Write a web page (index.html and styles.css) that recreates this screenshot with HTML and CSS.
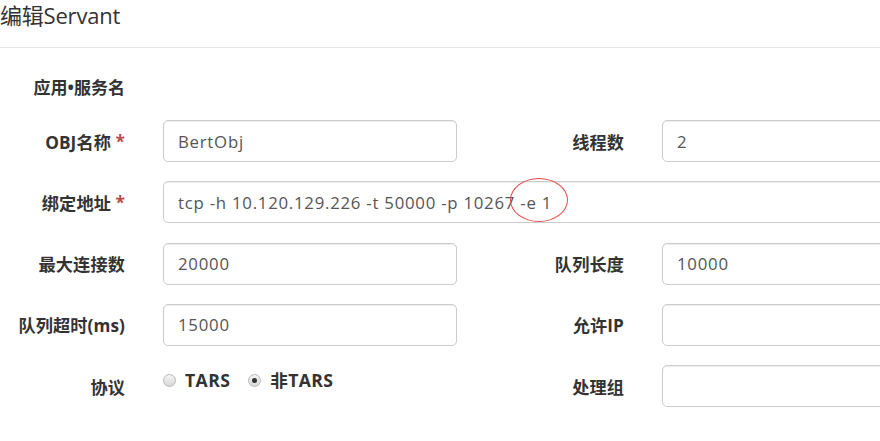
FILE: index.html
```html
<!DOCTYPE html>
<html lang="zh">
<head>
<meta charset="utf-8">
<link rel="stylesheet" href="styles.css">
</head>
<body>
<div class="header">
  <h4 class="title">编辑Servant</h4>
</div>
<form class="form">
  <div class="group-title">应用•服务名</div>
  <div class="grid">
    <label class="lbl">OBJ名称 <span class="req">*</span></label>
    <div class="field"><input class="ctrl" value="BertObj"></div>
    <label class="lbl">线程数</label>
    <div class="field open"><input class="ctrl" value="2"></div>

    <label class="lbl">绑定地址 <span class="req">*</span></label>
    <div class="field open span3">
      <input class="ctrl" value="tcp -h 10.120.129.226 -t 50000 -p 10267 -e 1">
      <span class="mark"></span>
    </div>

    <label class="lbl">最大连接数</label>
    <div class="field"><input class="ctrl" value="20000"></div>
    <label class="lbl">队列长度</label>
    <div class="field open"><input class="ctrl" value="10000"></div>

    <label class="lbl">队列超时(ms)</label>
    <div class="field"><input class="ctrl" value="15000"></div>
    <label class="lbl">允许IP</label>
    <div class="field open"><input class="ctrl" value=""></div>

    <label class="lbl">协议</label>
    <div class="field radios">
      <label class="radio"><span class="dot"></span>TARS</label>
      <label class="radio"><span class="dot on"></span>非TARS</label>
    </div>
    <label class="lbl">处理组</label>
    <div class="field open"><input class="ctrl" value=""></div>
  </div>
</form>
</body>
</html>
```
FILE: styles.css
```css
html, body {
  margin: 0;
  padding: 0;
  background: #fff;
  overflow: hidden;
}
body {
  width: 880px;
  height: 441px;
  font-family: "Open Sans", "Noto Sans CJK SC", sans-serif;
  color: #333;
}
.header {
  height: 47px;
  border-bottom: 1px solid #e5e5e5;
}
.title {
  margin: 0;
  padding-top: 0;
  font-size: 22px;
  font-weight: normal;
  line-height: 30px;
  color: #333;
  letter-spacing: -0.2px;
}
.form {
  margin: 0;
}
.group-title {
  width: 125px;
  text-align: right;
  font-weight: bold;
  font-size: 17px;
  line-height: 24px;
  margin-top: 28px;
  height: 24px;
}
.grid {
  display: grid;
  grid-template-columns: 163px 294px 205px 1fr;
  grid-auto-rows: 42px;
  row-gap: 19.3px;
  margin-top: 20px;
}
.lbl {
  font-weight: bold;
  font-size: 17.2px;
  letter-spacing: 0.1px;
  text-align: right;
  padding-right: 38px;
  display: flex;
  align-items: center;
  justify-content: flex-end;
  white-space: pre;
}
.req {
  color: #b94a48;
  font-weight: bold;
}
.field {
  position: relative;
}
.field.open {
  overflow-x: clip;
}
.field.open .ctrl {
  width: calc(100% + 20px);
}
.span3 {
  grid-column: 2 / 5;
}
.ctrl {
  display: block;
  box-sizing: border-box;
  width: 100%;
  height: 42px;
  padding: 0 14px;
  border: 1px solid #ccc;
  border-radius: 5px;
  box-shadow: inset 0 1px 1px rgba(0,0,0,0.075);
  font-family: "Open Sans", "Noto Sans CJK SC", sans-serif;
  font-size: 16.8px;
  letter-spacing: 0.75px;
  color: #555;
  background: #fff;
  outline: none;
}
.mark {
  position: absolute;
  left: 347px;
  top: -3px;
  width: 58px;
  height: 44px;
  border: 1px solid #ea4a4a;
  border-radius: 50%;
  box-sizing: border-box;
}
.radios {
  display: flex;
  align-items: flex-start;
  padding-top: 3px;
}
.radio {
  display: flex;
  align-items: center;
  font-weight: bold;
  font-size: 17.6px;
  letter-spacing: 0.4px;
  line-height: 24px;
  margin-right: 18px;
}
.dot {
  width: 13px;
  height: 13px;
  box-sizing: border-box;
  border-radius: 50%;
  border: 1px solid #b8b8b8;
  background: linear-gradient(#f4f4f4, #d8d8d8);
  margin-right: 9px;
  position: relative;
}
.dot.on::after {
  content: "";
  position: absolute;
  left: 3px;
  top: 3px;
  width: 5px;
  height: 5px;
  border-radius: 50%;
  background: #333;
}
```
